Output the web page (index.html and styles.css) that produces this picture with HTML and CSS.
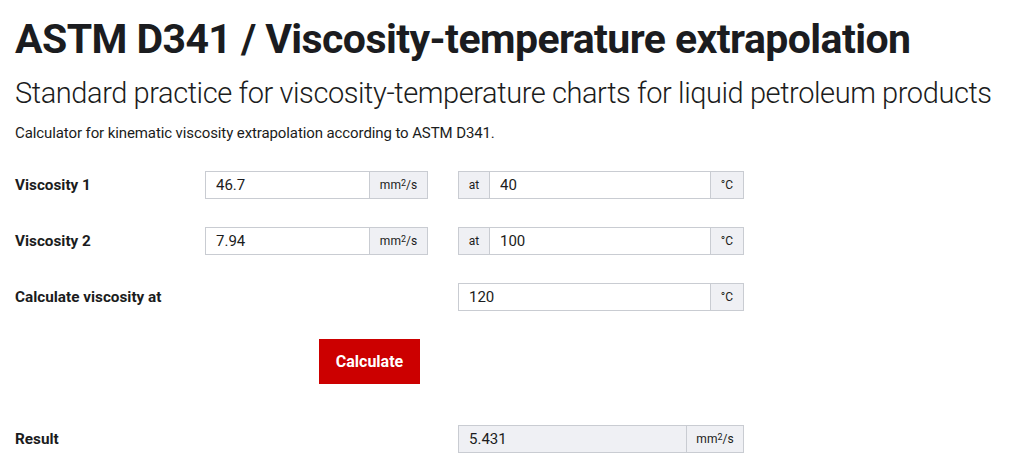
FILE: index.html
```html
<!DOCTYPE html>
<html lang="en">
<head>
<meta charset="utf-8">
<title>ASTM D341</title>
<link rel="stylesheet" href="styles.css">
</head>
<body>
<main class="page">
  <h1 class="title">ASTM D341 / Viscosity-temperature extrapolation</h1>
  <h2 class="subtitle">Standard practice for viscosity-temperature charts for liquid petroleum products</h2>
  <p class="intro">Calculator for kinematic viscosity extrapolation according to ASTM D341.</p>

  <form class="calc">
    <label class="label">Viscosity 1</label>
    <div class="group">
      <input class="field" type="text" value="46.7">
      <span class="addon addon-unit">mm<sup>2</sup>/s</span>
    </div>
    <div class="group">
      <span class="addon addon-at">at</span>
      <input class="field" type="text" value="40">
      <span class="addon addon-deg">°C</span>
    </div>

    <label class="label">Viscosity 2</label>
    <div class="group">
      <input class="field" type="text" value="7.94">
      <span class="addon addon-unit">mm<sup>2</sup>/s</span>
    </div>
    <div class="group">
      <span class="addon addon-at">at</span>
      <input class="field" type="text" value="100">
      <span class="addon addon-deg">°C</span>
    </div>

    <label class="label">Calculate viscosity at</label>
    <div></div>
    <div class="group">
      <input class="field" type="text" value="120">
      <span class="addon addon-deg">°C</span>
    </div>

    <div></div>
    <div class="button-cell"><button type="button" class="btn">Calculate</button></div>
    <div></div>

    <label class="label result-label">Result</label>
    <div></div>
    <div class="group result-group">
      <input class="field field-readonly" type="text" value="5.431" readonly>
      <span class="addon addon-result">mm<sup>2</sup>/s</span>
    </div>
  </form>
</main>
</body>
</html>
```

FILE: styles.css
```css
* { box-sizing: border-box; }

body {
  margin: 0;
  font-family: Roboto, "Liberation Sans", Arial, sans-serif;
  color: #1b1c20;
  background: #ffffff;
}

.page {
  padding: 0 15px;
}

.title {
  margin: 0;
  padding-top: 17px;
  font-size: 41px;
  font-weight: 700;
  line-height: 44px;
  letter-spacing: -0.58px;
}

.subtitle {
  margin: 14px 0 0;
  font-size: 29px;
  font-weight: 300;
  line-height: 36px;
  letter-spacing: -0.42px;
  white-space: nowrap;
}

.intro {
  margin: 12px 0 0;
  font-size: 15px;
  line-height: 20px;
  letter-spacing: -0.1px;
}

.calc {
  margin-top: 28px;
  display: grid;
  grid-template-columns: 160px 223px 286px;
  column-gap: 30px;
  row-gap: 28px;
  align-items: center;
}

.label {
  font-size: 15.3px;
  font-weight: 700;
  line-height: 28px;
  white-space: nowrap;
}

.group {
  display: flex;
  height: 28px;
}

.field {
  flex: 1;
  min-width: 0;
  height: 28px;
  margin: 0;
  padding: 0 10px;
  border: 1px solid #c9ccd2;
  border-radius: 0;
  font-family: inherit;
  font-size: 15px;
  color: #1b1c20;
  background: #fff;
  outline: none;
}

.addon {
  display: flex;
  align-items: center;
  justify-content: center;
  height: 28px;
  border: 1px solid #c9ccd2;
  background: #eff0f4;
  font-size: 12px;
  color: #1b1c20;
}

.addon sup {
  font-size: 9px;
  line-height: 0;
  position: relative;
  top: -2px;
}

.addon-unit {
  width: 58px;
  border-left: none;
}

.addon-at {
  width: 31px;
  border-right: none;
}

.addon-deg {
  width: 33px;
  border-left: none;
}

.addon-result {
  width: 57px;
  border-left: none;
}

.field-readonly {
  background: #eff0f4;
}

.button-cell {
  padding-left: 114px;
}

.btn {
  width: 101px;
  height: 45px;
  margin: 0;
  padding: 0;
  border: none;
  border-radius: 0;
  background: #cc0000;
  color: #fff;
  font-family: inherit;
  font-size: 16px;
  font-weight: 700;
  cursor: pointer;
}

.result-label,
.result-group {
  margin-top: 13px;
}
```
